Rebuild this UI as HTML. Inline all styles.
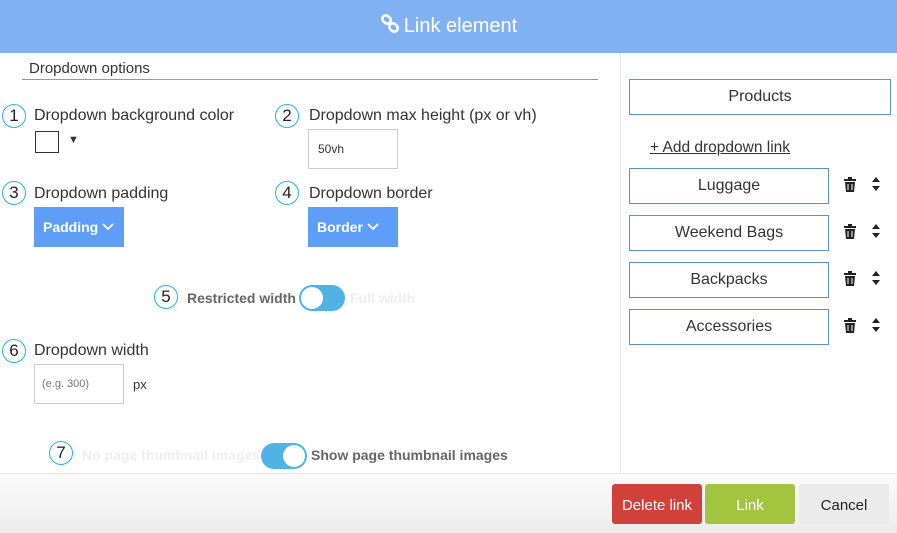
<!DOCTYPE html>
<html><head><style>
*{margin:0;padding:0;box-sizing:border-box}
body{width:897px;height:533px;position:relative;overflow:hidden;background:#fff;font-family:"Liberation Sans",sans-serif;color:#333}
.a{position:absolute}
.hdr{left:0;top:0;width:897px;height:53px;background:#80b1f3;color:#fff;font-size:20px;text-align:center;line-height:53px}
.c{position:absolute;width:24px;height:24px;border:1.5px solid #22b1e6;border-radius:50%;text-align:center;line-height:21px;font-size:17px;color:#222}
.l{position:absolute;font-size:16px;color:#333}
.btn{position:absolute;background:#5e9ef9;color:#fff;font-weight:bold;font-size:14px;height:40px;line-height:40px;padding-left:9px}
.btn svg{vertical-align:1px;margin-left:4px}
.box{position:absolute;border:1.5px solid #5b8fdb;text-align:center;font-size:16px;color:#333}
.tg{position:absolute;width:46px;height:26px;border-radius:13px;background:#4fb3e6}
.tg i{position:absolute;top:2px;width:22px;height:22px;border-radius:50%;background:#fff}
.b{position:absolute;top:484px;height:40px;line-height:40px;text-align:center;font-size:15px;border-radius:3px;padding-top:2px}
.t{position:absolute;font-size:14px;font-weight:bold}
</style></head><body>
<div class="a hdr"><svg width="20" height="20" viewBox="0 0 20 20" style="vertical-align:-2px;margin-right:4px"><g fill="none" stroke="#fff" stroke-width="2.6"><rect x="2" y="2" width="9" height="7" rx="3.5" transform="rotate(40 6.5 5.5)"/><rect x="9" y="10" width="9" height="7" rx="3.5" transform="rotate(40 13.5 13.5)"/></g></svg>Link element</div>
<div class="l" style="left:29px;top:60px;font-size:15px">Dropdown options</div>
<div class="a" style="left:22px;top:79px;width:576px;height:1px;background:#8c9bb0"></div>
<div class="a" style="left:620px;top:53px;width:1px;height:420px;background:#e6e6e6"></div>

<div class="c" style="left:2px;top:104px">1</div>
<div class="l" style="left:34px;top:107px">Dropdown background color</div>
<div class="a" style="left:35px;top:131px;width:24px;height:22px;border:1px solid #333"></div>
<div class="a" style="left:68px;top:134px;font-size:11px">▼</div>

<div class="c" style="left:275px;top:104px">2</div>
<div class="l" style="left:309px;top:107px">Dropdown max height (px or vh)</div>
<div class="a" style="left:308px;top:129px;width:90px;height:40px;border:1px solid #ccc;font-size:12px;line-height:38px;padding-left:9px">50vh</div>

<div class="c" style="left:2px;top:181px">3</div>
<div class="l" style="left:34px;top:185px">Dropdown padding</div>
<div class="btn" style="left:34px;top:207px;width:90px">Padding<svg width="12" height="8" viewBox="0 0 12 8"><path d="M1 1l5 5 5-5" fill="none" stroke="#fff" stroke-width="1.8"/></svg></div>
<div class="c" style="left:275px;top:181px">4</div>
<div class="l" style="left:309px;top:185px">Dropdown border</div>
<div class="btn" style="left:308px;top:207px;width:90px">Border<svg width="12" height="8" viewBox="0 0 12 8"><path d="M1 1l5 5 5-5" fill="none" stroke="#fff" stroke-width="1.8"/></svg></div>

<div class="c" style="left:154px;top:285px">5</div>
<div class="t" style="left:187px;top:290px;color:#666">Restricted width</div>
<div class="tg" style="left:299px;top:285px"><i style="left:2px"></i></div>
<div class="t" style="left:350px;top:290px;color:#eee">Full width</div>

<div class="c" style="left:2px;top:339px">6</div>
<div class="l" style="left:34px;top:342px">Dropdown width</div>
<div class="a" style="left:34px;top:364px;width:90px;height:40px;border:1px solid #ccc;font-size:11px;line-height:38px;padding-left:7px;color:#777">(e.g. 300)</div>
<div class="a" style="left:133px;top:377px;font-size:13px">px</div>

<div class="c" style="left:49px;top:441px">7</div>
<div class="t" style="left:82px;top:447px;color:#eee">No page thumbnail images</div>
<div class="tg" style="left:261px;top:443px"><i style="left:22px"></i></div>
<div class="t" style="left:311px;top:447px;color:#666">Show page thumbnail images</div>

<div class="box" style="left:629px;top:79px;width:262px;height:36px;line-height:33px">Products</div>
<div class="a" style="left:650px;top:139px;font-size:15.5px;text-decoration:underline">+ Add dropdown link</div>
<div class="box" style="left:629px;top:168px;width:200px;height:36px;line-height:34px">Luggage</div>
<div class="box" style="left:629px;top:215px;width:200px;height:36px;line-height:34px">Weekend Bags</div>
<div class="box" style="left:629px;top:262px;width:200px;height:36px;line-height:34px">Backpacks</div>
<div class="box" style="left:629px;top:309px;width:200px;height:36px;line-height:34px">Accessories</div>
<svg class="a" style="left:843px;top:177px" width="40" height="160" viewBox="0 0 40 160">
<g fill="#222" id="r"><rect x="1" y="2" width="12" height="2"/><rect x="5" y="0" width="4" height="2"/><path d="M2 5h10l-1 10H3z"/><rect x="4.5" y="7" width="1" height="6" fill="#fff"/><rect x="8.5" y="7" width="1" height="6" fill="#fff"/><path d="M33 0l4 5h-8zM33 14l4-5h-8z"/></g>
<use href="#r" y="47"/><use href="#r" y="94"/><use href="#r" y="141"/>
</svg>

<div class="a" style="left:0;top:473px;width:897px;height:60px;background:linear-gradient(#fbfbfb,#ececec);border-top:1px solid #e6e6e6"></div>
<div class="b" style="left:612px;width:90px;background:#d2403a;color:#fff">Delete link</div>
<div class="b" style="left:705px;width:90px;background:#a3c43f;color:#fff">Link</div>
<div class="b" style="left:799px;width:90px;background:#ebebeb;color:#222">Cancel</div>
</body></html>
